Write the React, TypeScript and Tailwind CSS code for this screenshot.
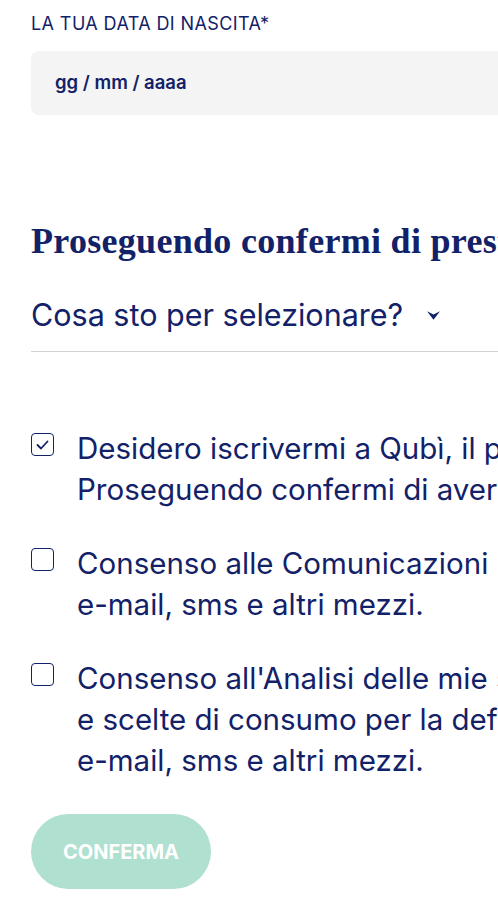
const navy = "text-[#122168]";

const Checkbox = ({ checked }: { checked?: boolean }) => (
  <span className="mt-[5px] flex h-[23px] w-[23px] shrink-0 items-center justify-center rounded-[4px] border border-[#122168] bg-white">
    {checked && (
      <svg width="13" height="10" viewBox="0 0 13 10" fill="none">
        <path d="M1.5 5l3.5 3.5L11.5 1.5" stroke="#122168" strokeWidth="1.8" strokeLinecap="round" strokeLinejoin="round" />
      </svg>
    )}
  </span>
);

const ConsentRow = ({ checked, lines }: { checked?: boolean; lines: string[] }) => (
  <label className="flex items-start gap-[23px]">
    <Checkbox checked={checked} />
    <span className={`text-[29.5px] leading-[41px] ${navy}`}>
      {lines.map((l) => (
        <span key={l} className="block whitespace-nowrap">
          {l}
        </span>
      ))}
    </span>
  </label>
);

export default function App() {
  return (
    <div className="min-h-[918px] w-full overflow-hidden bg-white font-['Inter',sans-serif]">
      <div className="w-[1100px] pl-[31px] pt-[14px]">
        {/* Data di nascita */}
        <p className={`text-[18px] uppercase leading-[20px] tracking-[0.4px] ${navy}`}>La tua data di nascita*</p>
        <div className="mt-[17px] flex h-[64px] items-center rounded-[8px] bg-[#f4f4f4] px-[24px]">
          <span className={`text-[18.5px] font-semibold ${navy}`}>gg / mm / aaaa</span>
        </div>

        {/* Consensi */}
        <h2 className={`mt-[104px] whitespace-nowrap font-['Liberation_Serif',serif] text-[36px] font-bold leading-[44px] tracking-[0.3px] ${navy}`}>
          Proseguendo confermi di prestare i seguenti consensi
        </h2>
        <button className={`mt-[32px] flex items-center gap-[24px] text-[30.5px] leading-[40px] ${navy}`}>
          Cosa sto per selezionare?
          <svg width="13" height="9" viewBox="0 0 13 9">
            <path d="M0 0.3L6.5 3.4L13 0.3L6.5 8.7Z" fill="#122168" />
          </svg>
        </button>
        <div className="mt-[16px] h-px bg-[#d2d2d2]" />

        <div className="mt-[76px] flex flex-col gap-[33px]">
          <ConsentRow
            checked
            lines={[
              "Desidero iscrivermi a Qubì, il programma fedeltà di Esselunga.",
              "Proseguendo confermi di aver letto l'informativa privacy.",
            ]}
          />
          <ConsentRow
            lines={["Consenso alle Comunicazioni Direct Marketing tramite", "e-mail, sms e altri mezzi."]}
          />
          <ConsentRow
            lines={[
              "Consenso all'Analisi delle mie spese, abitudini",
              "e scelte di consumo per la definizione del profilo tramite",
              "e-mail, sms e altri mezzi.",
            ]}
          />
        </div>

        <button className="mt-[33px] flex h-[75px] w-[180px] items-center justify-center rounded-full bg-[#b0e0cf] text-[20px] font-bold uppercase text-white">
          Conferma
        </button>
      </div>
    </div>
  );
}
